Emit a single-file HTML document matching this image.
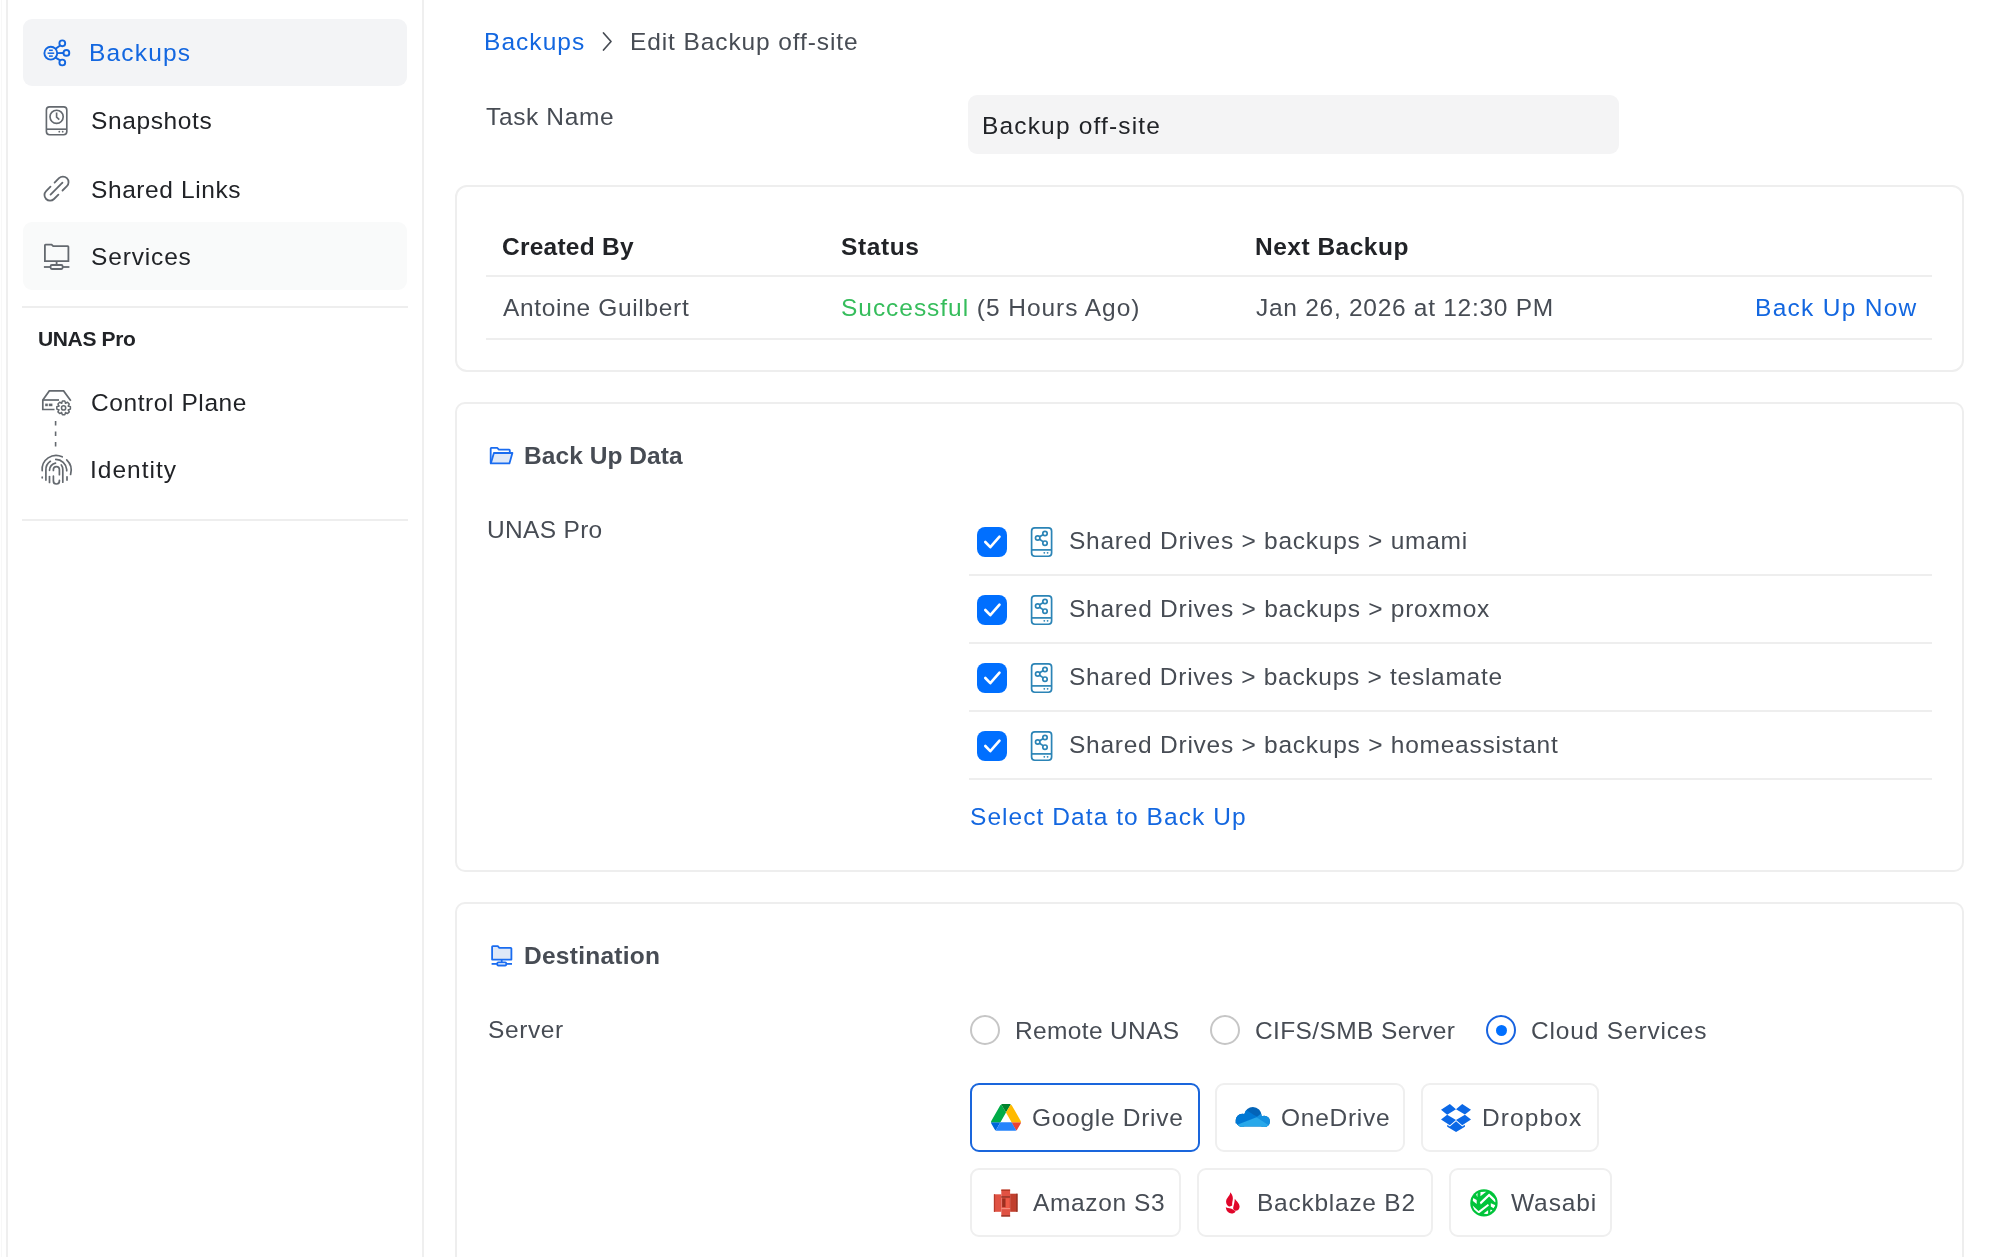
<!DOCTYPE html>
<html><head><meta charset="utf-8"><title>Edit Backup</title>
<style>
*{box-sizing:border-box;margin:0;padding:0}
html,body{width:2000px;height:1257px;overflow:hidden;background:#fff}
body{font-family:"Liberation Sans",sans-serif;position:relative;color:#212327}
.a{position:absolute;white-space:nowrap;line-height:24px;font-size:24px;will-change:transform}
.vl{position:absolute;top:0;height:1257px;background:#efefef}
.nav{position:absolute;left:23px;width:384px;height:67px;border-radius:9px}
.card{position:absolute;left:455px;width:1509px;border:2px solid #eeeeee;background:#fff}
.hl{position:absolute;height:2px;background:#eeeeee}
.cb{position:absolute;left:977px;width:30px;height:30px;border-radius:8px;background:#006fff}
.radio{position:absolute;width:30px;height:30px;border-radius:50%;border:2px solid #c6c6c6}
.btn{position:absolute;height:69px;border:2px solid #efefef;border-radius:9px}
svg{position:absolute;overflow:visible}
</style></head><body>

<div class="vl" style="left:1px;width:1px;background:#f8f8f8"></div>
<div class="vl" style="left:6px;width:1.5px"></div>
<div class="vl" style="left:422px;width:2px"></div>
<div class="nav" style="top:19px;background:#f3f4f6"></div>
<div class="nav" style="top:222px;height:68px;background:#f9fafa"></div>
<div class="hl" style="left:22px;width:386px;top:306px"></div>
<div class="hl" style="left:22px;width:386px;top:519px"></div>

<svg style="left:0;top:0" width="2000" height="100"><polyline points="603.5,33 611,41.5 603.5,50" fill="none" stroke="#474c54" stroke-width="1.7" stroke-linecap="round" stroke-linejoin="round"/></svg>
<div style="position:absolute;left:968px;top:95px;width:651px;height:59px;border-radius:9px;background:#f4f4f5"></div>

<div class="card" style="top:185px;height:187px;border-radius:12px"></div>
<div class="hl" style="left:486px;width:1446px;top:275px"></div>
<div class="hl" style="left:486px;width:1446px;top:338px"></div>

<div class="card" style="top:402px;height:470px;border-radius:10px"></div>
<div class="hl" style="left:969px;width:963px;top:574px"></div>
<div class="hl" style="left:969px;width:963px;top:642px"></div>
<div class="hl" style="left:969px;width:963px;top:710px"></div>
<div class="hl" style="left:969px;width:963px;top:778px"></div>
<div class="cb" style="top:527px"></div><svg style="left:0;top:0" width="2000" height="1257"><polyline points="985.3,542 990.3,547.2 999.5,536.7" fill="none" stroke="#fff" stroke-width="2.6" stroke-linecap="round" stroke-linejoin="round"/></svg><div class="cb" style="top:595px"></div><svg style="left:0;top:0" width="2000" height="1257"><polyline points="985.3,610 990.3,615.2 999.5,604.7" fill="none" stroke="#fff" stroke-width="2.6" stroke-linecap="round" stroke-linejoin="round"/></svg><div class="cb" style="top:663px"></div><svg style="left:0;top:0" width="2000" height="1257"><polyline points="985.3,678 990.3,683.2 999.5,672.7" fill="none" stroke="#fff" stroke-width="2.6" stroke-linecap="round" stroke-linejoin="round"/></svg><div class="cb" style="top:731px"></div><svg style="left:0;top:0" width="2000" height="1257"><polyline points="985.3,746 990.3,751.2 999.5,740.7" fill="none" stroke="#fff" stroke-width="2.6" stroke-linecap="round" stroke-linejoin="round"/></svg>
<svg style="left:0;top:0" width="2000" height="1257" viewBox="0 0 2000 1257"><g fill="none" stroke="#2b84b6" stroke-width="1.7">
<rect x="1031.6" y="527.85" width="20" height="28.4" rx="3.2"/>
<line x1="1031.6" y1="549.9" x2="1051.6" y2="549.9"/>
<circle cx="1045" cy="533.5" r="2.2"/><circle cx="1037.7" cy="538" r="2.2"/><circle cx="1045" cy="543.2" r="2.2"/>
<line x1="1039.6" y1="536.7" x2="1043" y2="534.7"/><line x1="1039.6" y1="539.3" x2="1043" y2="541.6"/>
</g><g fill="#2b84b6"><circle cx="1044.3" cy="552.8" r="0.9"/><circle cx="1047.6" cy="552.8" r="0.9"/></g></svg><svg style="left:0;top:0" width="2000" height="1257" viewBox="0 0 2000 1257"><g fill="none" stroke="#2b84b6" stroke-width="1.7">
<rect x="1031.6" y="595.85" width="20" height="28.4" rx="3.2"/>
<line x1="1031.6" y1="617.9" x2="1051.6" y2="617.9"/>
<circle cx="1045" cy="601.5" r="2.2"/><circle cx="1037.7" cy="606" r="2.2"/><circle cx="1045" cy="611.2" r="2.2"/>
<line x1="1039.6" y1="604.7" x2="1043" y2="602.7"/><line x1="1039.6" y1="607.3" x2="1043" y2="609.6"/>
</g><g fill="#2b84b6"><circle cx="1044.3" cy="620.8" r="0.9"/><circle cx="1047.6" cy="620.8" r="0.9"/></g></svg><svg style="left:0;top:0" width="2000" height="1257" viewBox="0 0 2000 1257"><g fill="none" stroke="#2b84b6" stroke-width="1.7">
<rect x="1031.6" y="663.85" width="20" height="28.4" rx="3.2"/>
<line x1="1031.6" y1="685.9" x2="1051.6" y2="685.9"/>
<circle cx="1045" cy="669.5" r="2.2"/><circle cx="1037.7" cy="674" r="2.2"/><circle cx="1045" cy="679.2" r="2.2"/>
<line x1="1039.6" y1="672.7" x2="1043" y2="670.7"/><line x1="1039.6" y1="675.3" x2="1043" y2="677.6"/>
</g><g fill="#2b84b6"><circle cx="1044.3" cy="688.8" r="0.9"/><circle cx="1047.6" cy="688.8" r="0.9"/></g></svg><svg style="left:0;top:0" width="2000" height="1257" viewBox="0 0 2000 1257"><g fill="none" stroke="#2b84b6" stroke-width="1.7">
<rect x="1031.6" y="731.85" width="20" height="28.4" rx="3.2"/>
<line x1="1031.6" y1="753.9" x2="1051.6" y2="753.9"/>
<circle cx="1045" cy="737.5" r="2.2"/><circle cx="1037.7" cy="742" r="2.2"/><circle cx="1045" cy="747.2" r="2.2"/>
<line x1="1039.6" y1="740.7" x2="1043" y2="738.7"/><line x1="1039.6" y1="743.3" x2="1043" y2="745.6"/>
</g><g fill="#2b84b6"><circle cx="1044.3" cy="756.8" r="0.9"/><circle cx="1047.6" cy="756.8" r="0.9"/></g></svg>

<div class="card" style="top:902px;height:400px;border-radius:10px"></div>
<div class="radio" style="left:970px;top:1015px"></div>
<div class="radio" style="left:1210px;top:1015px"></div>
<div class="radio" style="left:1486px;top:1015px;border-color:#1763e0"></div>
<div style="position:absolute;left:1495.5px;top:1024.5px;width:11px;height:11px;border-radius:50%;background:#006fff"></div>

<div class="btn" style="left:970px;top:1083px;width:230px;border-color:#1a66dc"></div>
<div class="btn" style="left:1215px;top:1083px;width:190px"></div>
<div class="btn" style="left:1421px;top:1083px;width:178px"></div>
<div class="btn" style="left:970px;top:1168px;width:211px"></div>
<div class="btn" style="left:1197px;top:1168px;width:236px"></div>
<div class="btn" style="left:1449px;top:1168px;width:163px"></div>

<!-- backups icon -->
<svg style="left:0;top:0" width="440" height="560"><g fill="none" stroke="#1367e0" stroke-width="1.9">
<circle cx="50.8" cy="53.2" r="6.4"/>
<circle cx="62.3" cy="43.3" r="2.9"/><circle cx="66.4" cy="52.9" r="2.9"/><circle cx="62.3" cy="62.5" r="2.9"/>
<line x1="57.2" y1="53.1" x2="63.5" y2="53"/>
<line x1="55.6" y1="48.8" x2="60.2" y2="45.4"/><line x1="55.6" y1="57.6" x2="60.2" y2="60.4"/>
<line x1="49" y1="50.3" x2="52.8" y2="50.3" stroke-width="1.5"/><line x1="47.6" y1="53.2" x2="54.2" y2="53.2" stroke-width="1.5"/><line x1="49" y1="56.1" x2="52.8" y2="56.1" stroke-width="1.5"/>
</g></svg>
<!-- snapshots icon -->
<svg style="left:0;top:0" width="440" height="560"><g fill="none" stroke="#64696f" stroke-width="1.65">
<rect x="46.4" y="106.9" width="20.4" height="27.8" rx="3.2"/>
<line x1="46.4" y1="129.2" x2="66.8" y2="129.2"/>
<circle cx="56.6" cy="116.8" r="6.6"/>
<polyline points="56.6,112.6 56.6,117.2 59.3,119.6"/>
</g><g fill="#64696f"><circle cx="59.3" cy="131.7" r="0.9"/><circle cx="62.7" cy="131.7" r="0.9"/></g></svg>
<!-- link icon -->
<svg style="left:0;top:0" width="440" height="560"><g transform="translate(56.5,188.6) rotate(-45)" fill="none" stroke="#64696f" stroke-width="1.8" stroke-linecap="round">
<path d="M2.9 -5.6 H9.1 A5.6 5.6 0 0 1 9.1 5.6 H2.9"/>
<path d="M-2.9 -5.6 H-9.1 A5.6 5.6 0 0 0 -9.1 5.6 H-2.9"/>
<path d="M-8.4 0 H8.4"/>
</g></svg>
<!-- services icon -->
<svg style="left:0;top:0" width="440" height="560"><g fill="none" stroke="#64696f" stroke-width="1.8">
<path d="M44.9 261.2 V245.2 Q44.9 244.6 45.5 244.6 H51.6 L53.2 246.2 H67.8 Q68.4 246.2 68.4 246.8 V261.2 Z"/>
<line x1="56.6" y1="261.2" x2="56.6" y2="265"/>
<rect x="50.6" y="265" width="12" height="4" rx="1.2"/>
<line x1="43.9" y1="267" x2="50.6" y2="267"/><line x1="62.6" y1="267" x2="69.4" y2="267"/>
</g></svg>
<!-- control plane icon -->
<svg style="left:0;top:0" width="440" height="560"><g fill="none" stroke="#64696f" stroke-width="1.7">
<path d="M54.5 409.5 H42.8 V400 L49.3 390.9 H63.6 L70.8 400.8"/>
<line x1="42.8" y1="400" x2="59" y2="400"/>
</g><g fill="#64696f"><rect x="45.2" y="403.6" width="2.6" height="2.6"/><rect x="48.8" y="403.6" width="3.6" height="2.6"/></g>
<g transform="translate(63.6,407.9)" fill="none" stroke="#64696f" stroke-width="1.5">
<path d="M-2.03 -4.57 L-1.20 -6.80 L1.20 -6.80 L2.03 -4.57 L1.79 -4.67 L3.96 -5.65 L5.65 -3.96 L4.67 -1.79 L4.57 -2.03 L6.80 -1.20 L6.80 1.20 L4.57 2.03 L4.67 1.79 L5.65 3.96 L3.96 5.65 L1.79 4.67 L2.03 4.57 L1.20 6.80 L-1.20 6.80 L-2.03 4.57 L-1.79 4.67 L-3.96 5.65 L-5.65 3.96 L-4.67 1.79 L-4.57 2.03 L-6.80 1.20 L-6.80 -1.20 L-4.57 -2.03 L-4.67 -1.79 L-5.65 -3.96 L-3.96 -5.65 L-1.79 -4.67 Z" stroke-linejoin="round"/>
<circle cx="0" cy="0" r="2.1"/>
</g></svg>
<!-- dashed connector -->
<svg style="left:0;top:0" width="440" height="560"><line x1="55.6" y1="421" x2="55.6" y2="448" stroke="#64696f" stroke-width="1.6" stroke-dasharray="4.5 6"/></svg>
<!-- identity fingerprint -->
<svg style="left:38px;top:452px" width="40" height="40" viewBox="0 0 40 40"><g fill="none" stroke="#64696f" stroke-width="1.7" stroke-linecap="round">
<path d="M4.2 18.7 A14 14 0 0 1 24.2 4.8"/>
<path d="M28.7 7.9 A14.5 14.5 0 0 1 32.6 22.4"/>
<path d="M4.2 25.2 V25.8"/>
<path d="M29 24.8 V28.1"/>
<path d="M12.4 9.3 A10.3 10.3 0 0 0 7.9 18.2 V28.1"/>
<path d="M17.8 7.4 A11 11 0 0 1 28.7 17.5 V18.7"/>
<path d="M17.5 11.2 A7 7 0 0 0 11.5 18.3"/>
<path d="M11.5 24.5 V30.5"/>
<path d="M23.3 13 Q24.8 14.8 24.8 17.5 V30.2"/>
<path d="M15.4 18.4 V17.6 A3 3 0 0 1 21.4 17.6 V22.7"/>
<path d="M15.4 24.2 V29 A3 3 0 0 0 21.4 29 V28.3"/>
</g></svg>
<!-- back up data folder -->
<svg style="left:0;top:0" width="2000" height="1257"><g stroke="#1a6cf0" stroke-width="1.8" stroke-linejoin="round">
<path d="M490.7 463.3 V448.4 Q490.7 447.8 491.3 447.8 H497.2 L498.9 449.6 H509.2 Q509.8 449.6 509.8 450.2 V452.2" fill="none"/>
<path d="M490.8 463.4 L493.9 453 H512.4 L509.4 463.4 Z" fill="#dfe8f7"/>
</g></svg>
<!-- destination icon -->
<svg style="left:0;top:0" width="2000" height="1257"><g stroke="#1a6cf0" stroke-width="1.8" stroke-linejoin="round">
<path d="M492.1 959.6 V946.8 Q492.1 946.1 492.8 946.1 H497.8 L499.3 947.8 H510.7 Q511.4 947.8 511.4 948.5 V959.6 Z" fill="#dfe8f7"/>
<line x1="501.7" y1="959.6" x2="501.7" y2="962.3" fill="none"/>
<rect x="497.3" y="962.3" width="8.9" height="3.2" rx="1" fill="none"/>
<line x1="491.6" y1="963.9" x2="497.3" y2="963.9"/><line x1="506.2" y1="963.9" x2="512" y2="963.9"/>
</g></svg>


<!-- google drive -->
<svg style="left:990.8px;top:1104.4px" width="30" height="26.8" viewBox="0 0 87.3 78">
<path d="m6.6 66.85 3.85 6.65c.8 1.4 1.950 2.5 3.3 3.3l13.75-23.8h-27.5c0 1.55.4 3.1 1.2 4.5z" fill="#0066da"/>
<path d="m43.65 25-13.75-23.8c-1.35.8-2.5 1.9-3.3 3.3l-25.4 44a9.06 9.06 0 0 0 -1.2 4.5h27.5z" fill="#00ac47"/>
<path d="m73.55 76.8c1.35-.8 2.5-1.9 3.3-3.3l1.6-2.75 7.650-13.25c.8-1.4 1.2-2.95 1.2-4.5h-27.502l5.852 11.5z" fill="#ea4335"/>
<path d="m43.65 25 13.75-23.8c-1.35-.8-2.9-1.2-4.5-1.2h-18.5c-1.6 0-3.15.45-4.5 1.2z" fill="#00832d"/>
<path d="m59.8 53h-32.3l-13.75 23.8c1.35.8 2.9 1.2 4.5 1.2h50.8c1.6 0 3.15-.45 4.5-1.2z" fill="#2684fc"/>
<path d="m73.4 26.5-12.7-22c-.8-1.4-1.95-2.5-3.3-3.3l-13.75 23.8 16.150 28h27.45c0-1.55-.4-3.1-1.2-4.5z" fill="#ffba00"/>
</svg>
<!-- onedrive -->
<svg style="left:1230px;top:1098px" width="46" height="38" viewBox="0 0 46 38">
<defs><clipPath id="odc">
<circle cx="12.3" cy="22.3" r="6.6"/><circle cx="22.9" cy="17.6" r="8.7"/><circle cx="34.2" cy="23.4" r="5.7"/>
<rect x="12.3" y="20" width="22" height="8.5"/><rect x="5.7" y="22.3" width="10" height="3"/>
<path d="M8 26 Q8 28.5 11.5 28.5 H34 V26 Z"/>
</clipPath></defs>
<g clip-path="url(#odc)">
<rect x="0" y="0" width="46" height="38" fill="#0364b8"/>
<path d="M0 16 L14 10.5 L24 17 L28 19 L0 30 Z" fill="#0078d4"/>
<path d="M26.5 19.2 L33 14 L46 18 V38 H36 Z" fill="#1490df"/>
<path d="M0 30.5 L6.5 27 L26.5 19.2 L39.5 27.8 L40 38 H0 Z" fill="#28a8ea"/>
</g>
</svg>
<!-- dropbox -->
<svg style="left:1441.4px;top:1104.2px" width="30" height="28" viewBox="0 0 42.4 39.6">
<path d="M12.5 0L0 8.1l8.7 7 12.5-7.8L12.5 0zM0 21.9l12.5 8.2 8.7-7.3-12.5-7.7L0 21.9zm21.2.9l8.8 7.3 12.4-8.1-8.6-6.9-12.6 7.7zm21.2-14.7L30 0l-8.8 7.3 12.6 7.7 8.6-6.9zM21.3 24.4l-8.8 7.3-3.7-2.5v2.8l12.5 7.5 12.5-7.5v-2.8l-3.8 2.5-8.7-7.3z" fill="#0b68e6"/>
</svg>
<!-- amazon s3 -->
<svg style="left:988px;top:1184px" width="36" height="38" viewBox="0 0 36 38">
<rect x="5.9" y="10.3" width="7.4" height="17.5" fill="#e05243"/>
<rect x="5.9" y="10.3" width="1.2" height="17.5" fill="#b83a2a"/>
<rect x="22.1" y="9.7" width="7.4" height="18.1" fill="#c13f2d"/>
<rect x="28.3" y="9.7" width="1.2" height="18.1" fill="#8c3123"/>
<rect x="13.3" y="5.6" width="8.8" height="26.9" fill="#e05243"/>
<rect x="13.3" y="5.6" width="8.8" height="1.2" fill="#a8331f"/>
<rect x="13.3" y="12.3" width="8.8" height="1.3" fill="#8c3123"/>
<rect x="13.3" y="24" width="8.8" height="1.2" fill="#f58d7e"/>
<rect x="13.3" y="31.3" width="8.8" height="1.2" fill="#8c3123"/>
<rect x="14.2" y="14.5" width="3.3" height="8.5" fill="#9c2f1f"/>
<rect x="17.9" y="14.5" width="3.3" height="9.5" fill="#ef5a46"/>
</svg>
<!-- backblaze -->
<svg style="left:1214px;top:1184px" width="36" height="38" viewBox="0 0 36 38" fill="#e0062a">
<path d="M16.3 8.2 C18.6 10.6 19.3 13.5 18.7 16.3 C18.2 18.6 18.1 20.2 18.2 21.6 C17 22.6 15.4 22.7 14.1 21.9 C12.3 20.6 11.7 18.2 12.3 16.1 C13.2 13.1 16.1 11.6 16.3 8.2 Z"/>
<path d="M20.8 14.7 C22.2 17 25.6 19.1 25.6 22.7 C25.6 25.2 23.6 26.9 21.3 26.7 C19.6 26.6 19 25.2 19.2 23.6 C19.5 21.5 20.6 18.8 20.8 14.7 Z"/>
<path d="M11.8 23 C13.1 24.1 15 24.3 16.8 24.5 C18.6 24.8 20 26.4 21.6 27.4 C20.4 29.4 17.6 30.1 15.5 29.1 C13.2 28.1 12 25.6 11.8 23 Z"/>
</svg>
<!-- wasabi -->
<svg style="left:1464px;top:1184px" width="40" height="38" viewBox="0 0 40 38">
<defs><clipPath id="wsc"><circle cx="19.95" cy="18.9" r="11.6"/></clipPath></defs>
<circle cx="19.95" cy="18.9" r="13.7" fill="#00c43a"/>
<g clip-path="url(#wsc)" fill="#fff">
<path d="M15.8 18.2 L25.1 9.4 L32.5 16.6 L31.2 18.4 L25.1 12.5 L16.8 20.6 Z"/>
<path d="M8.6 21.5 L14.5 27.1 L23.9 19.9 L25 21.6 L14.5 29.8 L7.3 23.2 Z"/>
<path d="M11.6 9 L13.6 8.6 L13.3 13.2 Z"/>
<path d="M16.5 8 L22.5 7.5 L16.4 12.3 Z"/>
<path d="M8.8 13.7 L12.7 16 L12.7 20 L8.6 16.8 Z"/>
<path d="M26.8 19.2 L31.5 21.2 L29.5 24.2 L26.8 22.5 Z"/>
<path d="M19.6 29.6 L24.1 26.2 L24.1 30.5 Z"/>
<path d="M26.2 25.7 L28.5 25.9 L26.6 28.6 Z"/>
</g>
</svg>

<div class="a" style="left:89.3px;top:41px;font-size:24.5px;font-weight:400;color:#1367e0;letter-spacing:1.167px">Backups</div>
<div class="a" style="left:91.0px;top:109px;font-size:24.5px;font-weight:400;color:#212327;letter-spacing:0.625px">Snapshots</div>
<div class="a" style="left:91.0px;top:177.5px;font-size:24.5px;font-weight:400;color:#212327;letter-spacing:0.591px">Shared Links</div>
<div class="a" style="left:91.0px;top:245px;font-size:24.5px;font-weight:400;color:#212327;letter-spacing:0.843px">Services</div>
<div class="a" style="left:37.5px;top:326.5px;font-size:21px;font-weight:700;color:#212327;letter-spacing:-0.357px">UNAS Pro</div>
<div class="a" style="left:91.0px;top:390.5px;font-size:24.5px;font-weight:400;color:#212327;letter-spacing:0.583px">Control Plane</div>
<div class="a" style="left:90.0px;top:458px;font-size:24.5px;font-weight:400;color:#212327;letter-spacing:1.0px">Identity</div>
<div class="a" style="left:483.6px;top:29.700000000000003px;font-size:24.5px;font-weight:400;color:#1367e0;letter-spacing:1.05px">Backups</div>
<div class="a" style="left:629.7px;top:30px;font-size:24.5px;font-weight:400;color:#474c54;letter-spacing:0.895px">Edit Backup off-site</div>
<div class="a" style="left:486.0px;top:104.5px;font-size:24.5px;font-weight:400;color:#474c54;letter-spacing:0.625px">Task Name</div>
<div class="a" style="left:982.2px;top:113.69999999999999px;font-size:24.5px;font-weight:400;color:#212327;letter-spacing:1.164px">Backup off-site</div>
<div class="a" style="left:501.8px;top:235.2px;font-size:24.5px;font-weight:700;color:#212327;letter-spacing:0.244px">Created By</div>
<div class="a" style="left:841.0px;top:235.2px;font-size:24.5px;font-weight:700;color:#212327;letter-spacing:0.6px">Status</div>
<div class="a" style="left:1255.0px;top:235.2px;font-size:24.5px;font-weight:700;color:#212327;letter-spacing:0.5px">Next Backup</div>
<div class="a" style="left:502.8px;top:295.9px;font-size:24.5px;font-weight:400;color:#474c54;letter-spacing:0.667px">Antoine Guilbert</div>
<div class="a" style="left:841.0px;top:295.9px;font-size:24.5px;font-weight:400;color:#474c54;letter-spacing:0.957px"><span style='color:#36bd5c'>Successful</span> (5 Hours Ago)</div>
<div class="a" style="left:1256.0px;top:295.9px;font-size:24.5px;font-weight:400;color:#474c54;letter-spacing:0.722px">Jan 26, 2026 at 12:30 PM</div>
<div class="a" style="left:1754.7px;top:295.9px;font-size:24.5px;font-weight:400;color:#1367e0;letter-spacing:1.29px">Back Up Now</div>
<div class="a" style="left:523.6px;top:444.1px;font-size:24.5px;font-weight:700;color:#474c54;letter-spacing:0.064px">Back Up Data</div>
<div class="a" style="left:486.5px;top:517.9px;font-size:24.5px;font-weight:400;color:#474c54;letter-spacing:0.321px">UNAS Pro</div>
<div class="a" style="left:1068.5px;top:529px;font-size:24.5px;font-weight:400;color:#474c54;letter-spacing:0.743px">Shared Drives &gt; backups &gt; umami</div>
<div class="a" style="left:1068.5px;top:597px;font-size:24.5px;font-weight:400;color:#474c54;letter-spacing:0.75px">Shared Drives &gt; backups &gt; proxmox</div>
<div class="a" style="left:1068.5px;top:665px;font-size:24.5px;font-weight:400;color:#474c54;letter-spacing:0.721px">Shared Drives &gt; backups &gt; teslamate</div>
<div class="a" style="left:1068.5px;top:733px;font-size:24.5px;font-weight:400;color:#474c54;letter-spacing:0.748px">Shared Drives &gt; backups &gt; homeassistant</div>
<div class="a" style="left:970.2px;top:805px;font-size:24.5px;font-weight:400;color:#1367e0;letter-spacing:1.06px">Select Data to Back Up</div>
<div class="a" style="left:523.9px;top:944px;font-size:24.5px;font-weight:700;color:#474c54;letter-spacing:0.26px">Destination</div>
<div class="a" style="left:487.5px;top:1017.75px;font-size:24.5px;font-weight:400;color:#474c54;letter-spacing:0.6px">Server</div>
<div class="a" style="left:1014.7px;top:1019px;font-size:24.5px;font-weight:400;color:#474c54;letter-spacing:0.35px">Remote UNAS</div>
<div class="a" style="left:1254.6px;top:1019px;font-size:24.5px;font-weight:400;color:#474c54;letter-spacing:0.379px">CIFS/SMB Server</div>
<div class="a" style="left:1530.8px;top:1019px;font-size:24.5px;font-weight:400;color:#474c54;letter-spacing:0.83px">Cloud Services</div>
<div class="a" style="left:1032.0px;top:1106.1px;font-size:24.5px;font-weight:400;color:#474c54;letter-spacing:0.718px">Google Drive</div>
<div class="a" style="left:1280.8px;top:1106.1px;font-size:24.5px;font-weight:400;color:#474c54;letter-spacing:0.742px">OneDrive</div>
<div class="a" style="left:1482.3px;top:1106.1px;font-size:24.5px;font-weight:400;color:#474c54;letter-spacing:1.116px">Dropbox</div>
<div class="a" style="left:1033.0px;top:1191px;font-size:24.5px;font-weight:400;color:#474c54;letter-spacing:0.625px">Amazon S3</div>
<div class="a" style="left:1257.4px;top:1191px;font-size:24.5px;font-weight:400;color:#474c54;letter-spacing:0.745px">Backblaze B2</div>
<div class="a" style="left:1511.0px;top:1191px;font-size:24.5px;font-weight:400;color:#474c54;letter-spacing:0.9px">Wasabi</div>

</body></html>
